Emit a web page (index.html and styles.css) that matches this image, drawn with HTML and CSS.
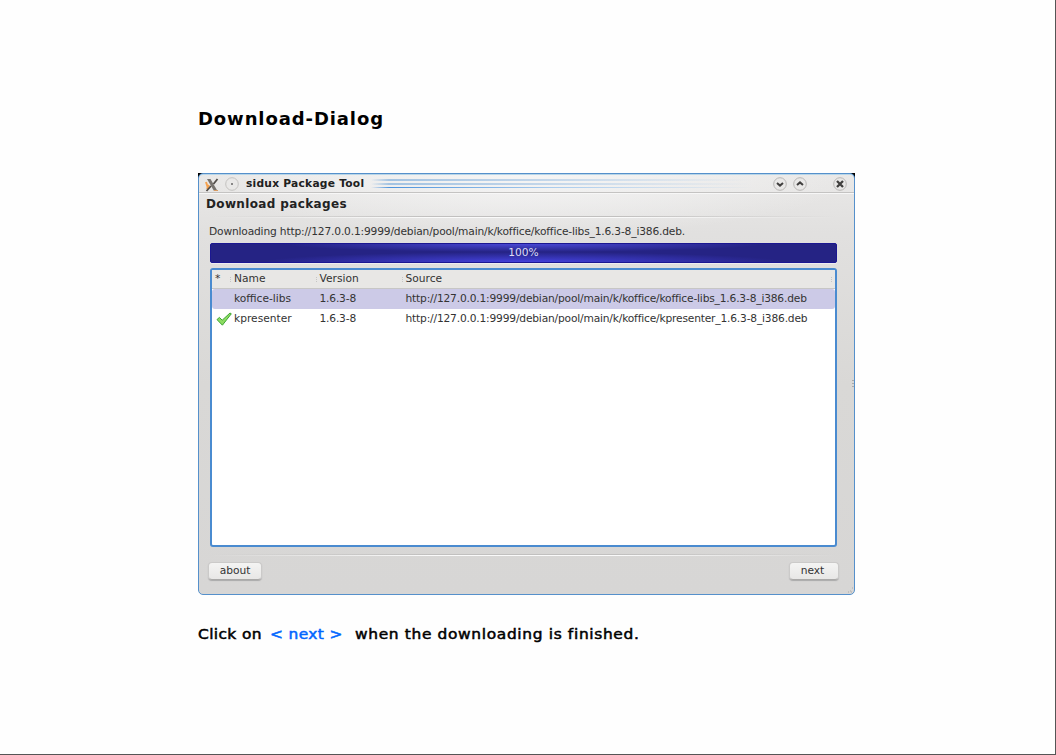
FILE: index.html
```
<!DOCTYPE html>
<html lang="en">
<head>
<meta charset="utf-8">
<title>Download-Dialog</title>
<link rel="stylesheet" href="styles.css">
</head>
<body>
<main class="page">
  <h1 class="heading">Download-Dialog</h1>
  <div class="corners">
  <section class="window">
    <header class="titlebar">
      <svg class="logo" width="14" height="14" viewBox="0 0 14 14"><path d="M1 4 3 10M2 11 4 7" stroke="#f5a04c" stroke-width="2"/><path d="M2 1h3.5l7 12H9z" fill="#77736f"/><path d="M12.5 1 8.5 6M6 8 1.5 13" stroke="#514d49" stroke-width="1.8"/><path d="M9 12.5h4" stroke="#d89b63"/></svg>
      <svg class="dot" width="14" height="14" viewBox="0 0 14 14"><circle cx="7" cy="7" r="6.3" fill="#e9e8e7" stroke="#c4c2c0"/><circle cx="7" cy="7" r="1" fill="#666"/></svg>
      <span class="title">sidux Package Tool</span>
      <span class="stripes"><i></i><i></i><i></i></span>
      <svg class="ctl" width="14" height="14" viewBox="0 0 14 14"><circle cx="7" cy="7" r="6.3" fill="#e9e8e7" stroke="#b9b7b5"/><path d="m4 6 3 2.6L10 6" fill="none" stroke="#403f3e" stroke-width="2"/></svg>
      <svg class="ctl up" width="14" height="14" viewBox="0 0 14 14"><circle cx="7" cy="7" r="6.3" fill="#e9e8e7" stroke="#b9b7b5"/><path d="m4 8 3-2.6L10 8" fill="none" stroke="#403f3e" stroke-width="2"/></svg>
      <svg class="ctl close" width="14" height="14" viewBox="0 0 14 14"><circle cx="7" cy="7" r="6.3" fill="#e9e8e7" stroke="#b9b7b5"/><path d="m4 4 6 6M10 4l-6 6" stroke="#403f3e" stroke-width="2.3"/></svg>
    </header>
    <h2 class="subtitle">Download packages</h2>
    <div class="rule"></div>
    <p class="status">Downloading http://127.0.0.1:9999/debian/pool/main/k/koffice/koffice-libs_1.6.3-8_i386.deb.</p>
    <div class="progress">100%</div>
    <div class="list">
      <div class="row head"><span class="star">*</span><span>Name</span><span>Version</span><span>Source</span></div>
      <div class="row selected"><span></span><span>koffice-libs</span><span class="tight">1.6.3-8</span><span class="tight">http://127.0.0.1:9999/debian/pool/main/k/koffice/koffice-libs_1.6.3-8_i386.deb</span></div>
      <div class="row"><span class="tick"><svg width="16" height="14" viewBox="0 0 16 14"><path d="M1 7.6 3.4 5.4 6.2 8.2 14 1 15.3 1.8 6.4 13.2z" fill="#8edc62" stroke="#3da534" stroke-linejoin="round"/></svg></span><span>kpresenter</span><span class="tight">1.6.3-8</span><span class="tight">http://127.0.0.1:9999/debian/pool/main/k/koffice/kpresenter_1.6.3-8_i386.deb</span></div>
    </div>
    <div class="rule low"></div>
    <footer class="buttons"><button class="btn about">about</button><button class="btn next">next</button></footer>
    <span class="splitter"></span>
    <svg class="grip" width="7" height="7" viewBox="0 0 7 7"><path d="M1 5h1M3 4h1M5 1h1M4 5h1" stroke="#aaa"/></svg>
  </section>
  </div>
  <p class="hint"><span class="click">Click on</span><span class="link">&lt; next &gt;</span><span class="rest">when the downloading is finished.</span></p>
</main>
</body>
</html>
```
FILE: styles.css
```
* { box-sizing: border-box; }
body { margin: 0; font-family: "DejaVu Sans", sans-serif; background: #fff; }
.page { width: 1056px; height: 755px; padding: 107px 0 0 198px; border-right: 1px solid #555; border-bottom: 1px solid #555; overflow: hidden; background: #fefefe; }
.heading { margin: 0 0 42px; height: 24px; line-height: 24px; font-size: 18px; font-weight: 700; letter-spacing: 0.9px; white-space: nowrap; }
.corners { width: 657px; height: 422px; background: linear-gradient(#000, #000) 0 0 / 100% 5px no-repeat; border-radius: 0 0 5px 5px; }
.window { position: relative; width: 657px; height: 422px; border: 1px solid #5590cb; border-radius: 5px; box-shadow: inset 0 1px #b9d6e8; background: radial-gradient(ellipse 330px 62px at 50% 0, #f5f5f5, rgba(240,240,240,0)), linear-gradient(#e9e8e7 0, #e1e0df 60px, #d9d8d6 210px, #d7d6d5); color: #333; font-size: 10.67px; white-space: nowrap; }
.titlebar { display: flex; align-items: center; height: 20px; padding-left: 6px; border-bottom: 1px solid #f7f7f7; box-shadow: inset 0 -1px #c4c3c2; }
.titlebar > * { flex: none; }
.logo { margin-top: 2px; }
.dot { margin-left: 6px; }
.title { margin-left: 7px; width: 118px; font-size: 10.67px; font-weight: 700; letter-spacing: 0.25px; color: #202020; }
.stripes { display: flex; flex-direction: column; gap: 2px; width: 402px; margin-left: 7px; }
.stripes i { height: 2px; background: linear-gradient(90deg, transparent, #a3c3e2 18px, #c4d7ea 45%, transparent 95%); }
.stripes i:last-child { height: 1px; background: linear-gradient(90deg, transparent, #4d93dc 18px, #a9cbed 45%, transparent 95%); }
.up { margin-left: 6px; }
.close { margin-left: 26px; }
.subtitle { margin: 0; height: 22px; padding-left: 7px; line-height: 20px; font-size: 12px; font-weight: 700; letter-spacing: 0.36px; color: #222; }
.rule { width: 627px; height: 2px; margin-left: 11px; background: linear-gradient(90deg, transparent, #c1c0bf 35%, #c1c0bf 65%, transparent) 0 0 / 100% 1px no-repeat, linear-gradient(90deg, transparent, #fafafa 35%, #fafafa 65%, transparent) 0 1px / 100% 1px no-repeat; }
.status { margin: 0; height: 25px; padding: 3px 0 0 10px; line-height: 21px; letter-spacing: -0.17px; }
.progress { width: 627px; height: 20px; margin-left: 11px; border: 1px solid #1b1791; border-radius: 2px; line-height: 18px; text-align: center; color: #dddcf5; background: radial-gradient(ellipse 240px 8px at 50% 0, #4948d5, transparent), radial-gradient(ellipse 260px 10px at 50% 100%, #4442dc, transparent), #252384; box-shadow: 0 1px #eeedf0; }
.list { width: 627px; height: 279px; margin: 5px 0 0 11px; border: 2px solid #4a8bd0; border-radius: 3px; background: #fff; overflow: hidden; }
.row { display: grid; grid-template-columns: 22px 85.5px 86px 1fr; height: 20px; line-height: 19px; }
.tight { letter-spacing: -0.18px; }
.head { height: 19px; line-height: 18px; background: #e8e7e5; border-bottom: 1px solid #c7c6c5; }
.head span { background: linear-gradient(#c6c5c4, #c6c5c4) right 3px top 7px / 1px 1px no-repeat, linear-gradient(#c6c5c4, #c6c5c4) right 3px top 9px / 1px 1px no-repeat, linear-gradient(#c6c5c4, #c6c5c4) right 3px top 11px / 1px 1px no-repeat; }
.star { padding-left: 3px; }
.selected { background: #cccae7; border-radius: 3px; }
.tick { padding: 3px 0 0 4px; line-height: 0; }
.low { margin-top: 7px; }
.buttons { display: flex; justify-content: space-between; padding: 6px 15px 0 9px; }
.btn { height: 18px; padding: 0; border: 1px solid #cbcac9; border-bottom-color: #aaa9a8; border-radius: 4px; background: linear-gradient(#f4f4f3, #e8e7e6); box-shadow: 0 1px 1px #aaa; font: 10.67px/16px "DejaVu Sans", sans-serif; color: #333; }
.about { width: 54px; }
.next { width: 50px; padding-right: 3px; }
.splitter { position: absolute; right: 0; top: 206px; width: 2px; height: 8px; background: repeating-linear-gradient(#aaa 0 1px, transparent 1px 3px); }
.grip { position: absolute; right: 0; bottom: 0; }
.hint { display: flex; margin: 28px 0 0; height: 22px; line-height: 22px; font-size: 14px; color: #000; white-space: pre; letter-spacing: 0.35px; -webkit-text-stroke: 0.5px currentColor; }
.hint span { flex: none; transform: scaleX(1.1); transform-origin: 0 50%; }
.click { width: 72px; }
.link { width: 85px; color: #0066ff; }
.rest { letter-spacing: 0.6px; }
```
